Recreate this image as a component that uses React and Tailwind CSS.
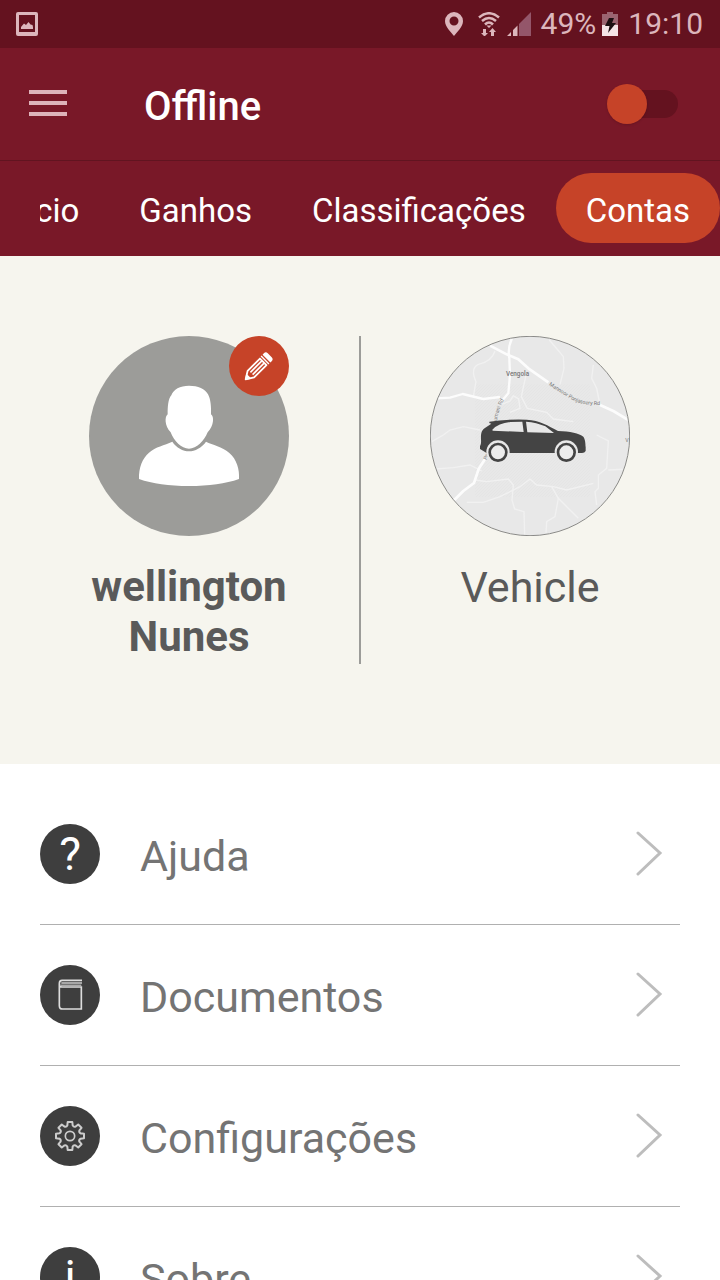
import React, { useState } from "react";

// Outline of an eight-toothed gear around the origin
const gearPath = () => {
  const parts = [];
  for (let i = 0; i < 8; i++) {
    const a = (i * Math.PI) / 4;
    const at = (x, y) =>
      `${(x * Math.cos(a) - y * Math.sin(a)).toFixed(1)} ${(
        x * Math.sin(a) +
        y * Math.cos(a)
      ).toFixed(1)}`;
    parts.push(
      `${i === 0 ? "M" : "L"}${at(-8, -32)} L${at(-7, -42)} L${at(7, -42)} L${at(8, -32)} Q${at(11, -26)} ${at(17, -28)}`
    );
  }
  return parts.join(" ") + " Z";
};

const StatusBar = () => (
  <div className="flex h-12 shrink-0 items-center bg-[#64121f] pl-4 pr-[17px] text-[30px] leading-none text-[#dcb6bc]">
    <svg className="h-6 w-[22px]" viewBox="0 0 22 24" aria-label="Screenshot saved">
      <path
        fill="currentColor"
        fillRule="evenodd"
        d="M2 0h18a2 2 0 0 1 2 2v20a2 2 0 0 1-2 2H2a2 2 0 0 1-2-2V2a2 2 0 0 1 2-2Zm1 3v17h16V3Z"
      />
      <path fill="currentColor" d="M5 17v-2l3-3.500 2 1.500 2.500-3 2 2.500 2 .5.500 2v2Z" />
    </svg>
    <div className="ml-auto flex items-center">
      <svg className="h-6 w-[18px]" viewBox="0 0 18 24" aria-label="Location">
        <path
          fill="currentColor"
          fillRule="evenodd"
          d="M9 0a9 9 0 0 1 9 9c0 6-6 11-9 15C6 20 0 15 0 9a9 9 0 0 1 9-9Zm0 4.500a4.500 4.500 0 1 0 0 9 4.500 4.500 0 0 0 0-9Z"
        />
      </svg>
      <svg className="ml-[15px] h-6 w-[22px]" viewBox="0 0 22 24" aria-label="Wi-Fi">
        <g fill="none" stroke="currentColor" strokeWidth="2.500">
          <path d="M1 5.500Q11-3 21 5.500" />
          <path d="M4 9Q11 3 18 9" />
          <path d="M7 12.500Q11 8.500 15 12.500" />
        </g>
        <path
          fill="currentColor"
          d="M8.500 13.500h5L11 16Z M5 17h3v4h2l-3.500 3.500L3 21h2Z M13 24v-4h-2l3.500-4 3.500 4h-2v4Z"
        />
      </svg>
      <svg className="ml-[7px] h-6 w-6" viewBox="0 0 24 24" aria-label="Signal">
        <path fill="#94566a" d="M12 12 24 0v24H12Z" />
        <path fill="currentColor" d="M0 24l4-4v4Z M6 24v-6l4.500-4.500V24Z" />
      </svg>
      <span className="ml-[10px]">49%</span>
      <svg className="ml-[6px] h-6 w-4" viewBox="0 0 16 24" aria-label="Battery charging">
        <path fill="#9b6470" d="M5 0h6v2h5v11H0V2h5Z" />
        <path fill="#f4e4e6" d="M0 13h16v11H0Z" />
        <path fill="#1c1012" d="M7 6h5l-2 5h4L6 21l1.500-7H3Z" />
      </svg>
      <span className="ml-[10px]">19:10</span>
    </div>
  </div>
);

const Header = () => {
  const [online, setOnline] = useState(false);

  return (
    <header className="flex h-[113px] shrink-0 items-center border-b border-[#611420] bg-[#791828] pl-[29px] pr-[42px]">
      <button type="button" aria-label="Menu" className="flex w-[38px] flex-col gap-[7px] pb-[2px]">
        <span className="h-1 bg-[#deb3ba]" />
        <span className="h-1 bg-[#deb3ba]" />
        <span className="h-1 bg-[#deb3ba]" />
      </button>
      <h1 className="ml-[77px] pt-[6px] text-[40px] font-medium leading-[48px] text-white">
        {online ? "Online" : "Offline"}
      </h1>
      <label className="relative ml-auto flex h-10 w-[71px] items-center">
        <input
          type="checkbox"
          role="switch"
          aria-label="Online"
          checked={online}
          onChange={(e) => setOnline(e.target.checked)}
          className="peer absolute inset-0 h-full w-full cursor-pointer opacity-0"
        />
        <span className="pointer-events-none ml-1 h-7 w-full rounded-full bg-[#64121f]" />
        <span className="pointer-events-none absolute left-0 size-10 rounded-full bg-[#c64328] shadow-sm peer-checked:left-8" />
      </label>
    </header>
  );
};

const tabs = ["Início", "Ganhos", "Classificações", "Contas"];

const Tabs = () => (
  <nav className="h-[95px] shrink-0 bg-[#791828] pl-10 pt-3">
    <div className="flex justify-end overflow-hidden">
      {tabs.map((tab) => (
        <button
          key={tab}
          type="button"
          className={`h-[70px] shrink-0 rounded-full px-[30px] pt-[6px] text-[33px] leading-10 text-white ${
            tab === "Contas" ? "bg-[#c64328]" : ""
          }`}
        >
          {tab}
        </button>
      ))}
    </div>
  </nav>
);

const Avatar = () => (
  <svg className="size-[200px]" viewBox="27 33 600 600" aria-label="Profile picture">
    <circle cx="327" cy="333" r="300" fill="#9c9c99" />
    <path
      fill="#fff"
      d="M327 182C300 182 280 193 274 211 264 222 263 246 263 268 254 275 253 302 272 322 282 348 304 371 327 371S372 348 383 322C402 302 403 275 393 268 394 246 392 222 384 208 376 192 354 182 327 182Z"
    />
    <path
      fill="#fff"
      d="M277 350c12 18 32 29 50 29s38-11 51-29c20 10 48 14 70 34 22 18 31 50 29 78-40 14-90 21-150 21s-110-7-150-21c-1-34 10-62 30-79 20-18 46-22 70-33Z"
    />
  </svg>
);

const PencilIcon = () => (
  <svg className="size-[60px]" viewBox="0 0 60 60" aria-hidden="true">
    <g transform="translate(16 44) rotate(-45) scale(.92)">
      <path
        fill="none"
        stroke="#fff"
        strokeWidth="2"
        strokeLinejoin="round"
        d="M1 0 9-5H28V5H9Z"
      />
      <path stroke="#fff" strokeWidth="1.800" d="M10-1.700H28M10 1.700H28" />
      <path fill="#fff" d="M0 0 6-4V4Z M30-6h1.500V6h-1.500Z M33-6h2a3 3 0 0 1 3 3v6a3 3 0 0 1-3 3h-2Z" />
    </g>
  </svg>
);

const VehiclePicture = () => (
  <svg className="size-[200px]" viewBox="30 33 600 600" aria-label="Vehicle on a map">
    <defs>
      <clipPath id="map-clip">
        <circle cx="330" cy="333" r="298" />
      </clipPath>
      <pattern id="hatch" width="9" height="9" patternUnits="userSpaceOnUse">
        <path d="M0 9 9 0" stroke="#dedede" strokeWidth="1" />
      </pattern>
      <path id="road-east" d="M386 180Q425 206 456 224T545 240" />
      <path id="road-north" d="M231 312Q226 262 266 200" />
      <path id="road-south" d="M200 406L214 370" />
    </defs>
    <g clipPath="url(#map-clip)">
      <rect x="30" y="33" width="600" height="600" fill="#e8e8e8" />
      <rect x="165" y="178" width="345" height="338" fill="url(#hatch)" />
      <g fill="none" stroke="#f1f1f1" strokeWidth="4">
        <path d="M225 78Q215 110 175 118 150 130 168 170L160 215" />
        <path d="M388 45Q410 70 430 95L432 130 420 178" />
        <path d="M318 150 304 215 322 250 380 262 400 282 460 290" />
        <path d="M240 240 270 228 280 212 296 222 300 250 270 262" />
        <path d="M35 350 70 330 90 315 130 305 180 315" />
        <path d="M45 432 100 428 150 420 185 438" />
        <path d="M165 465 200 470 265 462 280 480 276 525 284 552 312 560 314 630" />
        <path d="M140 532 190 532 240 515 300 485 330 462 350 480 400 485 440 495 520 475" />
        <path d="M395 485 415 520 405 575 380 590 378 625" />
        <path d="M415 520 475 580" />
        <path d="M530 330 565 348 560 430 535 450 535 490 525 500 530 540" />
        <path d="M565 435 630 432" />
        <path d="M540 240 530 190 515 160 520 120" />
      </g>
      <g fill="none" stroke="#fcfcfc" strokeLinejoin="round">
        <path strokeWidth="8" d="M210 62 260 88 295 103 325 130 385 172" />
        <path strokeWidth="8" d="M540 240 580 258 630 288" />
        <path strokeWidth="7" d="M276 40Q262 70 268 100L270 150 265 205 240 235" />
        <path strokeWidth="7" d="M50 220 90 218 128 207 190 222 240 216" />
        <path strokeWidth="8" d="M100 528 130 498 162 474 176 432 195 402" />
      </g>
      <g fill="#777" fontSize="16">
        <text x="258" y="153" fontSize="19" fontWeight="500">
          Vengola
        </text>
        <text>
          <textPath href="#road-east">Mannoor Ponjassery Rd</textPath>
        </text>
        <text>
          <textPath href="#road-north">Perumani Rd</textPath>
        </text>
        <text>
          <textPath href="#road-south">Pat</textPath>
        </text>
        <text x="616" y="350">
          V
        </text>
      </g>
    </g>
    <circle cx="330" cy="333" r="299" fill="none" stroke="#8a8a88" strokeWidth="3" />
    <path
      fill="#444"
      d="M208 290Q260 282 320 284C360 286 384 302 414 318 450 319 478 325 490 335 497 345 496 358 497 366V378Q494 384 486 384H200L180 372V364Q184 358 183 345C182 322 186 314 196 308L214 296 208 294Z"
    />
    <path
      fill="#e8e8e8"
      d="M217 314Q236 294 272 291L307 290 311 321 218 317Z M318 290Q350 292 376 304L402 324 322 322Z"
    />
    {[234, 439].map((cx) => (
      <g key={cx}>
        <circle cx={cx} cy="381" r="35" fill="#e8e8e8" />
        <circle cx={cx} cy="382" r="25" fill="#ececec" stroke="#444" strokeWidth="8" />
      </g>
    ))}
  </svg>
);

const Profile = () => (
  <section className="grid grid-cols-2 bg-[#f6f5ee] px-5 pb-[100px] pt-20 text-[#5a5a5a]">
    <div className="-mr-px flex flex-col items-center border-r-2 border-[#9c9c99] pb-[2px] pr-px">
      <div className="relative">
        <Avatar />
        <button
          type="button"
          aria-label="Edit profile"
          className="absolute right-0 top-0 rounded-full bg-[#c64328]"
        >
          <PencilIcon />
        </button>
      </div>
      <p className="mt-[26px] w-[260px] text-center text-[42px] font-bold leading-[50px]">
        wellington Nunes
      </p>
    </div>
    <div className="flex flex-col items-center">
      <VehiclePicture />
      <p className="mt-[26px] text-center text-[43px] leading-[50px]">Vehicle</p>
    </div>
  </section>
);

const BookIcon = () => (
  <svg className="size-[60px]" viewBox="30 30 180 180" fill="none" stroke="#ddd" aria-hidden="true">
    <path strokeWidth="5" d="M156 76H96Q88 76 88 86V152Q88 162 98 162H154V96H96Q88 96 88 86" />
    <path strokeWidth="5" stroke="#aaa" d="M92 91H154" />
    <path strokeWidth="4" d="M94 84H156" />
  </svg>
);

const GearIcon = () => (
  <svg className="size-[60px]" viewBox="-90 -90 180 180" fill="none" stroke="#ccc" aria-hidden="true">
    <path strokeWidth="6" strokeLinejoin="round" d={gearPath()} />
    <circle r="14" strokeWidth="5" />
  </svg>
);

const menu = [
  { label: "Ajuda", icon: "?" },
  { label: "Documentos", icon: <BookIcon /> },
  { label: "Configurações", icon: <GearIcon /> },
  { label: "Sobre", icon: "i" },
];

const Menu = () => (
  <ul className="px-10 pt-5">
    {menu.map(({ label, icon }) => (
      <li key={label} className="border-b border-[#b0b0b0]">
        <a href="#" className="flex items-center py-10">
          <span className="flex size-[60px] items-center justify-center rounded-full bg-[#3e3e3e] text-[46px] leading-none text-white">
            {icon}
          </span>
          <span className="ml-10 pt-1 text-[43px] leading-[50px] text-[#747474]">{label}</span>
          <svg
            className="ml-auto mr-[17px] h-[46px] w-7"
            viewBox="0 0 28 46"
            fill="none"
            stroke="#bdbdbd"
            strokeWidth="3"
            strokeLinecap="round"
            aria-hidden="true"
          >
            <path d="M3 2 25 22 3 43" />
          </svg>
        </a>
      </li>
    ))}
  </ul>
);

const App = () => (
  <div className="flex h-screen flex-col bg-white font-['Roboto',sans-serif]">
    <StatusBar />
    <Header />
    <Tabs />
    <main className="flex-1 overflow-y-auto [scrollbar-width:none]">
      <Profile />
      <Menu />
    </main>
  </div>
);

export default App;
